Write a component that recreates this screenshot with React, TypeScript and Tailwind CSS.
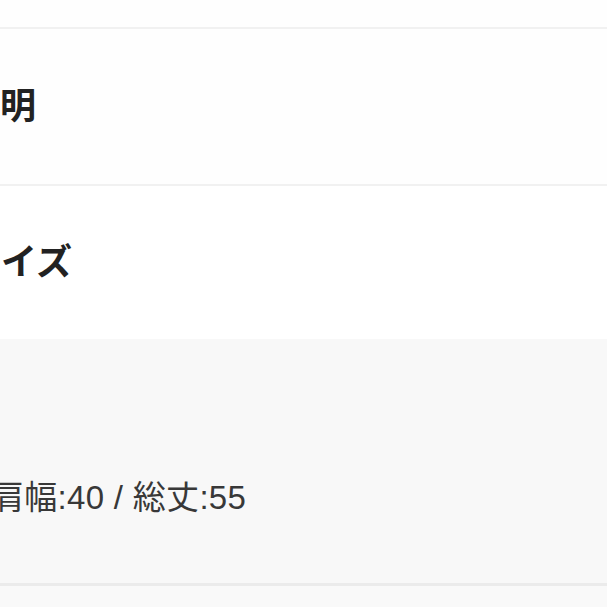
const jp = { fontFamily: '"Liberation Sans", "Noto Sans CJK JP", sans-serif' };

export default function App() {
  return (
    <div className="w-[607px] h-[607px] overflow-hidden bg-white" style={jp}>
      <div className="h-[27px] bg-[#fefefe]" />
      <div className="h-[157px] flex items-center border-t-2 border-[#f1f1f1] bg-[#fefefe]">
        <span className="-ml-[36px] text-[36px] leading-none font-bold text-[#222] whitespace-nowrap">説明</span>
      </div>
      <div className="h-[155px] flex items-center border-t-2 border-[#f1f1f1] bg-white">
        <span className="-ml-[35px] text-[36px] leading-none font-bold text-[#222] whitespace-nowrap">サイズ</span>
      </div>
      <div className="h-[244px] bg-[#f8f8f8] pt-[139px]">
        <p className="-ml-[9px] text-[33px] leading-[40px] tracking-[0.3px] text-[#383838] whitespace-nowrap">肩幅:40 / 総丈:55</p>
      </div>
      <div className="h-[3px] bg-[#ebebeb]" />
      <div className="h-[21px] bg-[#f9f9f9]" />
    </div>
  );
}
